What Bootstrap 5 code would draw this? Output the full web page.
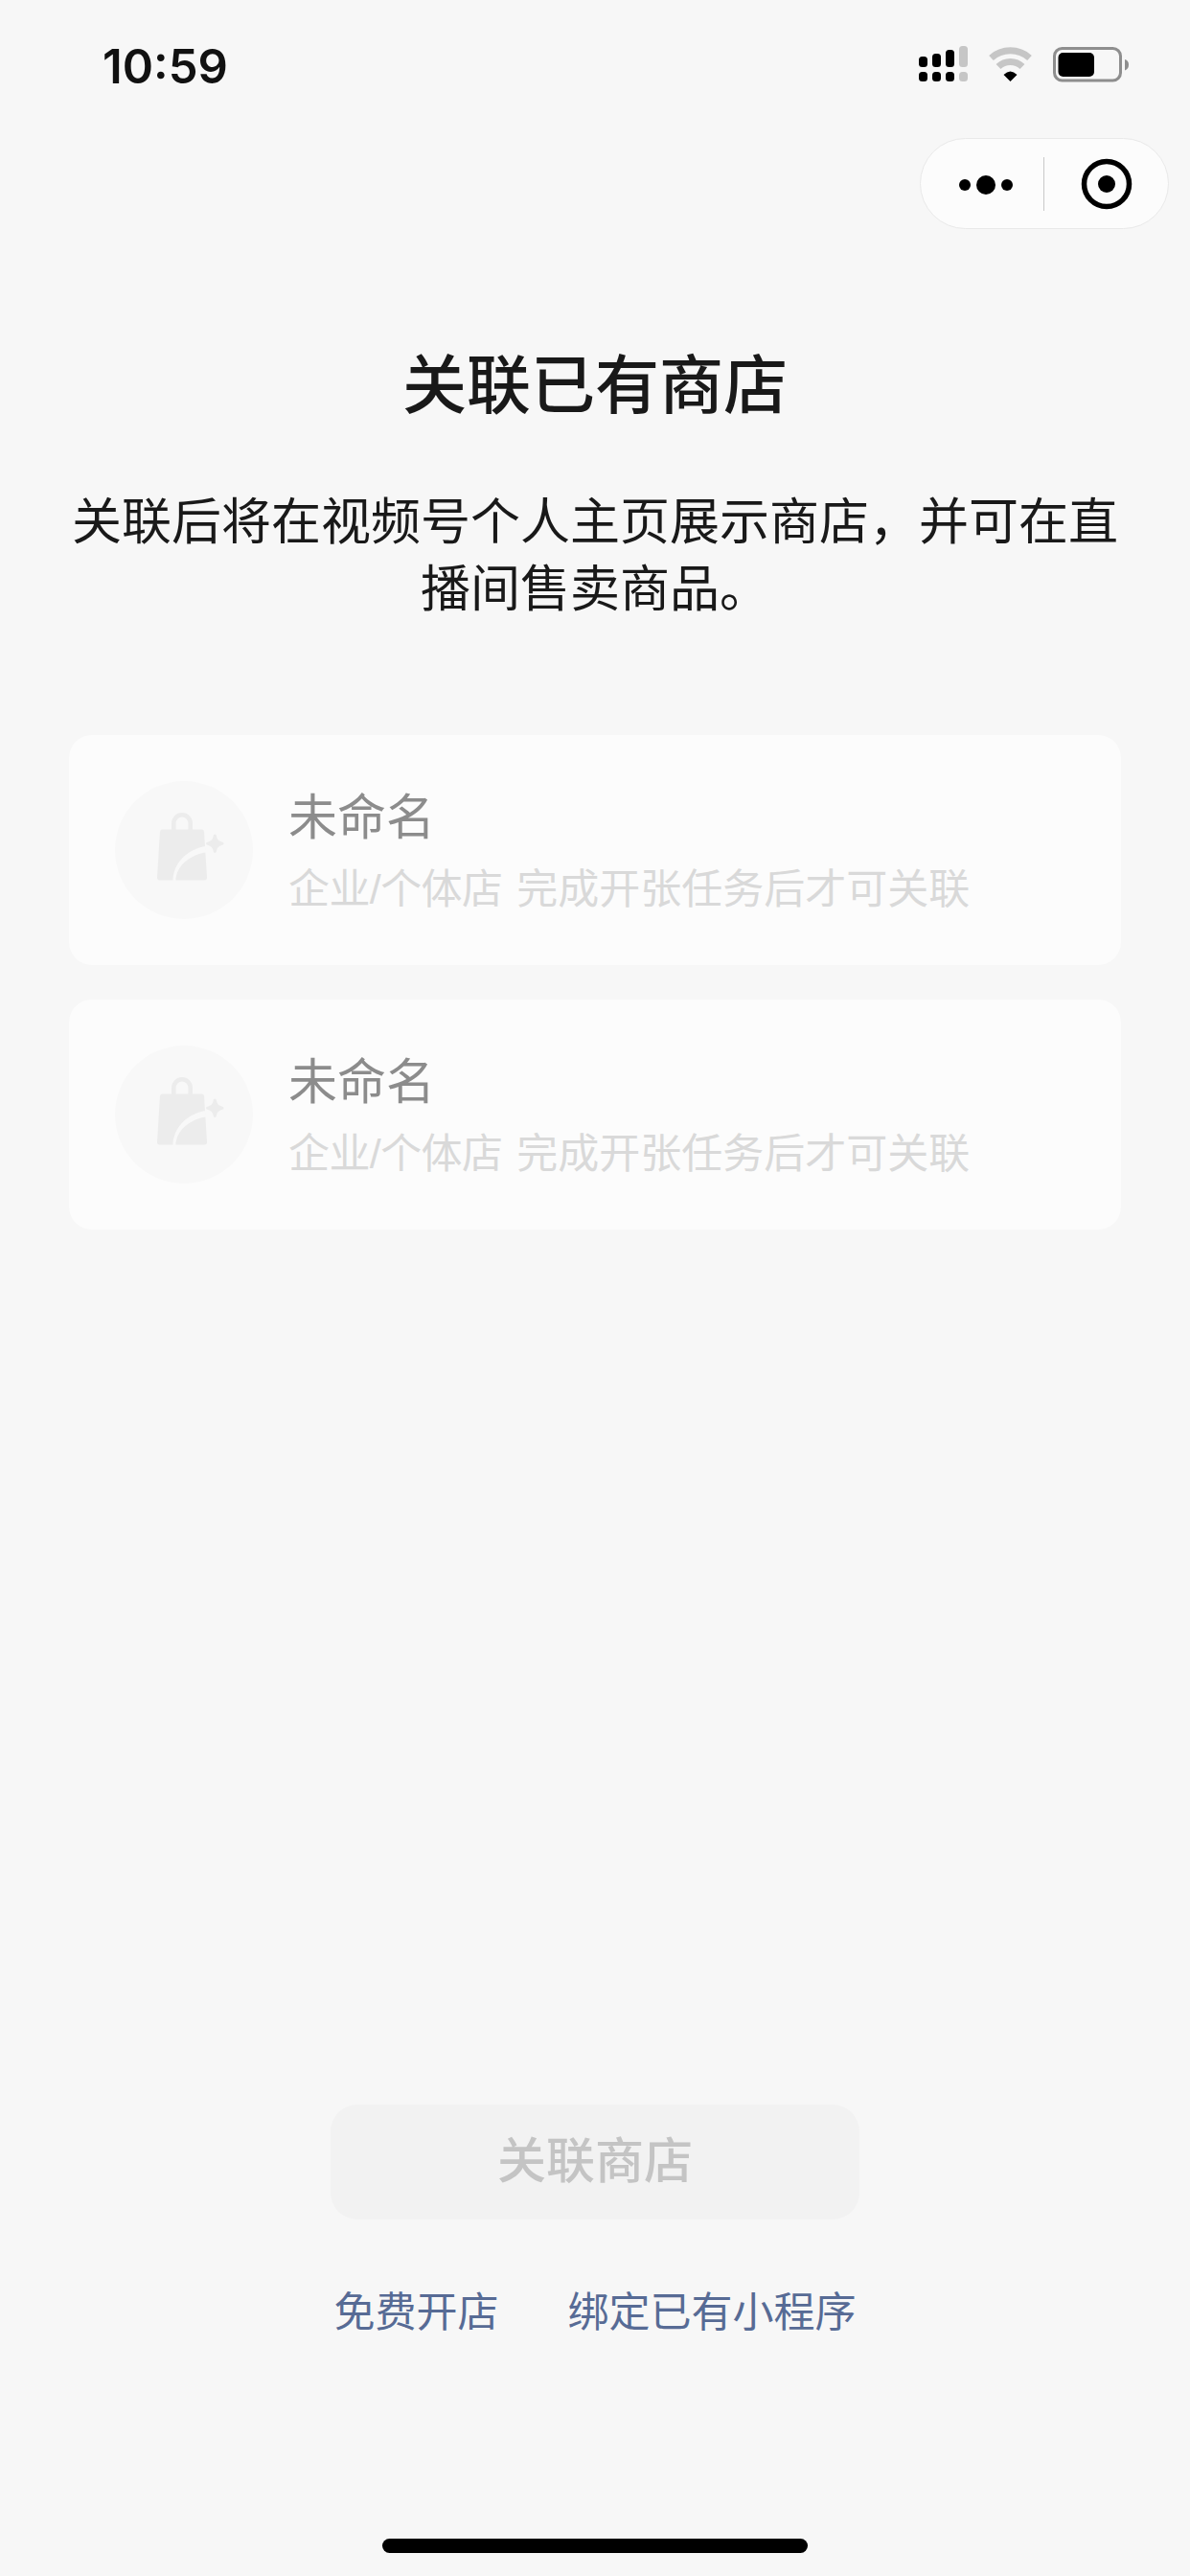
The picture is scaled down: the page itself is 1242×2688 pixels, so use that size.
<!DOCTYPE html>
<html lang="zh-CN">
<head>
<meta charset="utf-8">
<title>关联已有商店</title>
<link href="https://cdn.jsdelivr.net/npm/bootstrap@5.3.0/dist/css/bootstrap.min.css" rel="stylesheet">
<style>
html,body{background:#f7f7f7;}
body{font-family:"Liberation Sans","Noto Sans CJK SC",sans-serif;color:#191919;}
.screen{height:2688px;overflow:hidden;}
.statusbar{height:144px;padding:38px 63px 0 107px;}
.clock{font-family:Inter,"Liberation Sans",sans-serif;font-weight:600;font-size:49px;line-height:64px;letter-spacing:0;color:#111;}
.status-icons{margin-top:9px;}
.capsule-row{padding-right:22px;height:95px;}
.capsule{width:260px;height:95px;border:1px solid #e9e9e9;border-radius:48px;background:#fcfcfc;}
.page-title{margin:119px 0 0;font-size:67px;line-height:90px;font-weight:500;color:#191919;text-align:center;}
.page-desc{margin:62px 72px 0;font-size:52px;line-height:70px;text-align:center;color:#191919;}
.shop-list{margin:117px 72px 0;gap:36px;}
.shop-item{height:240px;border:0;border-radius:24px;background:#fcfcfc;padding:0 48px;gap:37px;flex-direction:row;align-items:center;}
.shop-thumb{width:144px;height:144px;flex:none;}
.shop-text{padding-top:3px;}
.shop-name{font-size:51px;line-height:70px;color:#8c8c8c;}
.shop-note{font-size:43px;line-height:60px;color:#d9d9d9;margin-top:9px;white-space:nowrap;}
.note-kind{letter-spacing:-.6px;margin-right:3px;}
.link-btn{width:552px;height:120px;border:0;border-radius:28px;background:#f2f2f2;color:#c4c4c4;font-size:51px;font-weight:500;opacity:1;}
.btn.link-btn:disabled{background:#f2f2f2;color:#c4c4c4;opacity:1;}
.bottom-links{margin-top:67px;gap:72px;font-size:43px;line-height:60px;}
.bottom-links a{color:#576b95;text-decoration:none;}
.home-row{margin-top:206px;}
.home-bar{width:444px;height:15px;border-radius:8px;background:#000;}
</style>
</head>
<body>
<div class="screen d-flex flex-column">
  <div class="statusbar d-flex justify-content-between align-items-start">
    <span class="clock">10:59</span>
    <svg class="status-icons" width="220" height="42" viewBox="958 47 220 42" aria-hidden="true">
      <g fill="#000">
        <rect x="958" y="59" width="9" height="11" rx="3.5"/><rect x="972" y="56" width="9" height="14" rx="3.5"/><rect x="986" y="52" width="9" height="18" rx="3.5"/>
        <rect x="958" y="75" width="9" height="10" rx="3.5"/><rect x="972" y="75" width="9" height="10" rx="3.5"/><rect x="986" y="75" width="9" height="10" rx="3.5"/>
      </g>
      <g fill="#c6c6c6"><rect x="1000" y="48" width="9" height="22" rx="3.5"/><rect x="1000" y="75" width="9" height="10" rx="3.5"/></g>
      <path d="M1033.500 60.500A30 30 0 0 1 1073.500 60.500" fill="none" stroke="#c6c6c6" stroke-width="7"/>
      <path d="M1041 69.500A18 18 0 0 1 1066 69.500" fill="none" stroke="#c6c6c6" stroke-width="7"/>
      <path d="M1046.500 78Q1053.500 71 1060.500 78L1053.500 85Z" fill="#000"/>
      <rect x="1099.500" y="50.500" width="69" height="33.500" rx="8" fill="none" stroke="#8e8e8e" stroke-width="3"/>
      <rect x="1103.500" y="55" width="37.500" height="25" rx="5" fill="#000"/>
      <path d="M1173 62Q1177 63 1177 67.500Q1177 72 1173 73.500Z" fill="#8e8e8e"/>
    </svg>
  </div>
  <div class="capsule-row d-flex justify-content-end">
    <div class="capsule d-flex align-items-center">
      <svg width="258" height="93" viewBox="0 0 258 93" aria-hidden="true">
        <circle cx="46" cy="48" r="6" fill="#000"/><circle cx="68" cy="48" r="10" fill="#000"/><circle cx="90" cy="48" r="6" fill="#000"/>
        <rect x="128" y="19" width="1" height="56" fill="#c9c9c9"/>
        <circle cx="194" cy="47" r="23.500" fill="none" stroke="#000" stroke-width="5.500"/><circle cx="194" cy="47" r="9" fill="#000"/>
      </svg>
    </div>
  </div>
  <h1 class="page-title">关联已有商店</h1>
  <p class="page-desc">关联后将在视频号个人主页展示商店，并可在直播间售卖商品。</p>
  <div class="shop-list d-flex flex-column">
    <div class="card shop-item">
      <svg class="shop-thumb" viewBox="0 0 144 144" aria-hidden="true">
        <circle cx="72" cy="72" r="72" fill="#f8f8f8"/>
        <path d="M61.300 51V44a8.700 8.700 0 0 1 17.400 0V51" fill="none" stroke="#ececec" stroke-width="4.500"/>
        <path d="M49.500 50.500H90.500a2.500 2.500 0 0 1 2.500 2.300L96 100.500a2.800 2.800 0 0 1-2.800 3H46.800a2.800 2.800 0 0 1-2.800-3L47 52.800a2.500 2.500 0 0 1 2.500-2.300Z" fill="#ececec"/>
        <path d="M60.500 104C60.500 87 74 71.500 94.500 68L95 74.500C78 77 63.500 89 63.500 104Z" fill="#f8f8f8"/>
        <path d="M104.300 55.500c1 0 1.500 .8 1.700 2.200.5 3 2.200 5 6 6 1 .3 1.500.8 1.500 1.500s-.5 1.200-1.500 1.500c-3.800 1-5.500 3-6 6-.2 1.400-.7 2.200-1.700 2.200s-1.500-.8-1.700-2.200c-.5-3-2.200-5-6-6-1-.3-1.500-.8-1.500-1.500s.5-1.200 1.500-1.500c3.800-1 5.500-3 6-6 .2-1.400.7-2.200 1.700-2.200Z" fill="#ececec"/>
      </svg>
      <div class="shop-text">
        <div class="shop-name">未命名</div>
        <div class="shop-note"><span class="note-kind">企业/个体店</span> 完成开张任务后才可关联</div>
      </div>
    </div>
    <div class="card shop-item">
      <svg class="shop-thumb" viewBox="0 0 144 144" aria-hidden="true">
        <circle cx="72" cy="72" r="72" fill="#f8f8f8"/>
        <path d="M61.300 51V44a8.700 8.700 0 0 1 17.400 0V51" fill="none" stroke="#ececec" stroke-width="4.500"/>
        <path d="M49.500 50.500H90.500a2.500 2.500 0 0 1 2.500 2.300L96 100.500a2.800 2.800 0 0 1-2.800 3H46.800a2.800 2.800 0 0 1-2.800-3L47 52.800a2.500 2.500 0 0 1 2.500-2.300Z" fill="#ececec"/>
        <path d="M60.500 104C60.500 87 74 71.500 94.500 68L95 74.500C78 77 63.500 89 63.500 104Z" fill="#f8f8f8"/>
        <path d="M104.300 55.500c1 0 1.500 .8 1.700 2.200.5 3 2.200 5 6 6 1 .3 1.500.8 1.500 1.500s-.5 1.200-1.500 1.500c-3.800 1-5.500 3-6 6-.2 1.400-.7 2.200-1.700 2.200s-1.500-.8-1.700-2.200c-.5-3-2.200-5-6-6-1-.3-1.500-.8-1.500-1.500s.5-1.200 1.500-1.500c3.800-1 5.500-3 6-6 .2-1.400.7-2.200 1.700-2.200Z" fill="#ececec"/>
      </svg>
      <div class="shop-text">
        <div class="shop-name">未命名</div>
        <div class="shop-note"><span class="note-kind">企业/个体店</span> 完成开张任务后才可关联</div>
      </div>
    </div>
  </div>
  <div class="mt-auto d-flex flex-column align-items-center">
    <button class="btn link-btn" type="button" disabled>关联商店</button>
    <div class="bottom-links d-flex justify-content-center">
      <a href="#">免费开店</a>
      <a href="#">绑定已有小程序</a>
    </div>
    <div class="home-row mb-4"><div class="home-bar"></div></div>
  </div>
</div>
<script src="https://cdn.jsdelivr.net/npm/bootstrap@5.3.0/dist/js/bootstrap.bundle.min.js"></script>
</body>
</html>
